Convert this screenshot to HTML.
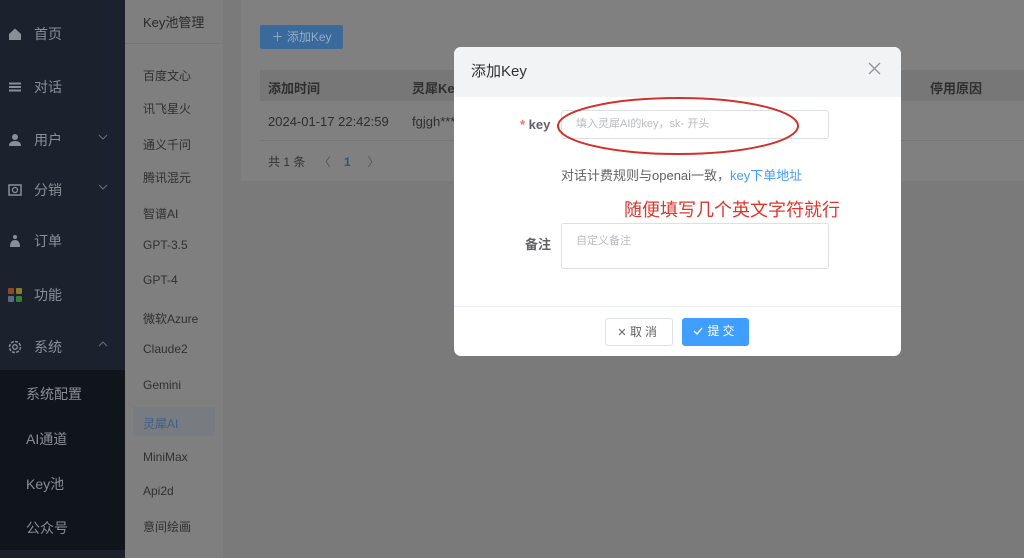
<!DOCTYPE html>
<html><head><meta charset="utf-8"><style>
*{margin:0;padding:0;box-sizing:border-box}
body{width:1024px;height:558px;overflow:hidden;background:#7a7a7a;font-family:"Liberation Sans","Noto Sans CJK SC",sans-serif;position:relative}
.side{position:absolute;left:0;top:0;width:125px;height:558px;background:#1b222d;color:#8a8f97}
.side .it{position:absolute;left:8px;font-size:14px;display:flex;align-items:center;width:110px}
.side .it .ic{display:inline-block;width:14px;height:14px;margin-right:12px}
.chev{position:absolute;left:90px;top:4px}
.sub{position:absolute;left:0;top:370px;width:125px;height:180px;background:#10141b}
.sub div{position:absolute;left:26px;font-size:14px;color:#8a8d93}
.col2{position:absolute;left:125px;top:0;width:98px;height:558px;background:#7f7f7f;color:#303030}
.col2 .t{position:absolute;left:18px;top:12px;font-size:13px;color:#2a2a2a}
.col2 .ln{position:absolute;left:0;top:43px;width:98px;height:1px;background:#767676}
.col2 div.m{position:absolute;left:18px;font-size:12px;color:#303030}
.card{position:absolute;left:241px;top:0;width:790px;height:181px;background:#808080}
.btn{position:absolute;left:260px;top:25px;width:83px;height:24px;background:#3a6a9c;color:#94acc5;font-size:12px;line-height:24px;text-align:center;border-radius:2px}
.th{position:absolute;left:260px;top:70px;width:764px;height:31px;background:#777;font-size:13px;font-weight:bold;color:#2e2e2e}
.th span,.row span{position:absolute;top:8px}
.row{position:absolute;left:260px;top:101px;width:764px;height:40px;border-bottom:1px solid #777;font-size:13px;color:#2e2e2e}
.row span{top:13px}
.pg{position:absolute;left:268px;top:153px;font-size:12px;color:#333}
.modal{position:absolute;left:454px;top:47px;width:447px;height:309px;background:#fff;border-radius:7px;overflow:hidden}
.mh{height:50px;background:#f2f3f5;font-size:15px;color:#303133;padding:13px 0 0 17px}
.lbl{position:absolute;font-size:13px;font-weight:bold;color:#606266}
.inp{position:absolute;left:107px;width:268px;border:1px solid #dcdfe6;border-radius:3px;font-size:11px;color:#b8bbc2;padding-left:14px}
.ft{position:absolute;left:0;top:259px;width:447px;height:1px;background:#ebeef5}
.b{position:absolute;top:271px;height:28px;font-size:12px;line-height:26px;text-align:center;border-radius:3px;letter-spacing:3px}
</style></head><body>
<div class="side">
<div class="it" style="top:24px"><svg class="ic" viewBox="0 0 14 14"><path d="M1 7L7 1.5L13 7V13H1Z" fill="#8a8f97"/></svg>首页</div>
<div class="it" style="top:77px"><svg class="ic" viewBox="0 0 14 14"><path d="M1 3.5H13M1 7H13M1 10.5H13" stroke="#8a8f97" stroke-width="2"/></svg>对话</div>
<div class="it" style="top:130px"><svg class="ic" viewBox="0 0 14 14"><circle cx="7" cy="4" r="3" fill="#8a8f97"/><path d="M1 13Q1 8 7 8Q13 8 13 13Z" fill="#8a8f97"/></svg>用户<svg class="chev" width="10" height="6"><path d="M1 1L5 5L9 1" stroke="#6a6f77" fill="none"/></svg></div>
<div class="it" style="top:180px"><svg class="ic" viewBox="0 0 14 14"><rect x="1" y="2" width="12" height="10" fill="none" stroke="#8a8f97" stroke-width="1.5"/><circle cx="7" cy="7" r="2.5" fill="none" stroke="#8a8f97" stroke-width="1.3"/></svg>分销<svg class="chev" width="10" height="6"><path d="M1 1L5 5L9 1" stroke="#6a6f77" fill="none"/></svg></div>
<div class="it" style="top:231px"><svg class="ic" viewBox="0 0 14 14"><circle cx="7" cy="3" r="2" fill="#8a8f97"/><path d="M2 13Q2 6 7 6Q12 6 12 13Z" fill="#8a8f97"/></svg>订单</div>
<div class="it" style="top:285px"><svg class="ic" viewBox="0 0 14 14"><rect x="0" y="0" width="6" height="6" rx="1" fill="#8a4a2a"/><rect x="8" y="0" width="6" height="6" rx="1" fill="#8a7a2a"/><rect x="0" y="8" width="6" height="6" rx="1" fill="#5a6a80"/><rect x="8" y="8" width="6" height="6" rx="1" fill="#3a7a3a"/></svg>功能</div>
<div class="it" style="top:337px"><svg class="ic" viewBox="0 0 14 14"><circle cx="7" cy="7" r="5.5" fill="none" stroke="#8a8f97" stroke-width="1.5" stroke-dasharray="3 1.3"/><circle cx="7" cy="7" r="2.3" fill="none" stroke="#8a8f97" stroke-width="1.3"/></svg>系统<svg class="chev" width="10" height="6"><path d="M1 5L5 1L9 5" stroke="#6a6f77" fill="none"/></svg></div>
<div class="sub"><div style="top:14px">系统配置</div><div style="top:59px">AI通道</div><div style="top:104px">Key池</div><div style="top:148px">公众号</div></div>
</div>
<div class="col2"><div class="t">Key池管理</div><div class="ln"></div>
<div class="m" style="top:67px">百度文心</div><div class="m" style="top:100px">讯飞星火</div><div class="m" style="top:136px">通义千问</div><div class="m" style="top:169px">腾讯混元</div><div class="m" style="top:205px">智谱AI</div><div class="m" style="top:238px">GPT-3.5</div><div class="m" style="top:273px">GPT-4</div><div class="m" style="top:310px">微软Azure</div><div class="m" style="top:342px">Claude2</div><div class="m" style="top:378px">Gemini</div>
<div style="position:absolute;left:8px;top:407px;width:82px;height:29px;background:#787c81"></div><div class="m" style="top:415px;color:#3c5f85">灵犀AI</div>
<div class="m" style="top:450px">MiniMax</div><div class="m" style="top:484px">Api2d</div><div class="m" style="top:518px">意间绘画</div></div>
<div class="card"></div>
<div class="btn">＋ 添加Key</div>
<div class="th"><span style="left:8px">添加时间</span><span style="left:152px">灵犀Key</span><span style="left:670px">停用原因</span></div>
<div class="row"><span style="left:8px">2024-01-17 22:42:59</span><span style="left:152px">fgjgh***</span></div>
<div class="pg">共 1 条 &nbsp;&nbsp;&nbsp;<span style="color:#555">〈</span>&nbsp;&nbsp;&nbsp;&nbsp;<b style="color:#2b5580">1</b>&nbsp;&nbsp;&nbsp;&nbsp;&nbsp;<span style="color:#555">〉</span></div>
<div class="modal">
<div class="mh">添加Key</div>
<svg style="position:absolute;left:414px;top:15px" width="13" height="13"><path d="M1 1L12 12M12 1L1 12" stroke="#909399" stroke-width="1.3"/></svg>
<div class="lbl" style="left:66px;top:70px"><span style="color:#f56c6c">*</span> key</div>
<div class="inp" style="top:63px;height:29px;line-height:27px">填入灵犀AI的key，sk- 开头</div>
<svg style="position:absolute;left:100px;top:48px" width="248" height="62"><ellipse cx="124" cy="31" rx="120" ry="28" fill="none" stroke="#d2302a" stroke-width="2"/></svg>
<div style="position:absolute;left:107px;top:118px;font-size:13px;color:#606266">对话计费规则与openai一致，<span style="color:#409eff">key下单地址</span></div>
<div style="position:absolute;left:170px;top:149px;font-size:18px;color:#e0352b">随便填写几个英文字符就行</div>
<div class="lbl" style="left:71px;top:187px">备注</div>
<div class="inp" style="top:176px;height:46px;padding-top:8px">自定义备注</div>
<div class="ft"></div>
<div class="b" style="left:151px;width:68px;border:1px solid #dcdfe6;color:#606266"><svg width="8" height="8" style="margin-right:4px"><path d="M1 1L7 7M7 1L1 7" stroke="#606266"/></svg>取消</div>
<div class="b" style="left:228px;width:67px;background:#409eff;color:#fff"><svg width="10" height="8" style="margin-right:4px"><path d="M1 4L4 7L9 1" stroke="#fff" fill="none" stroke-width="1.3"/></svg>提交</div>
</div>
</body></html>
